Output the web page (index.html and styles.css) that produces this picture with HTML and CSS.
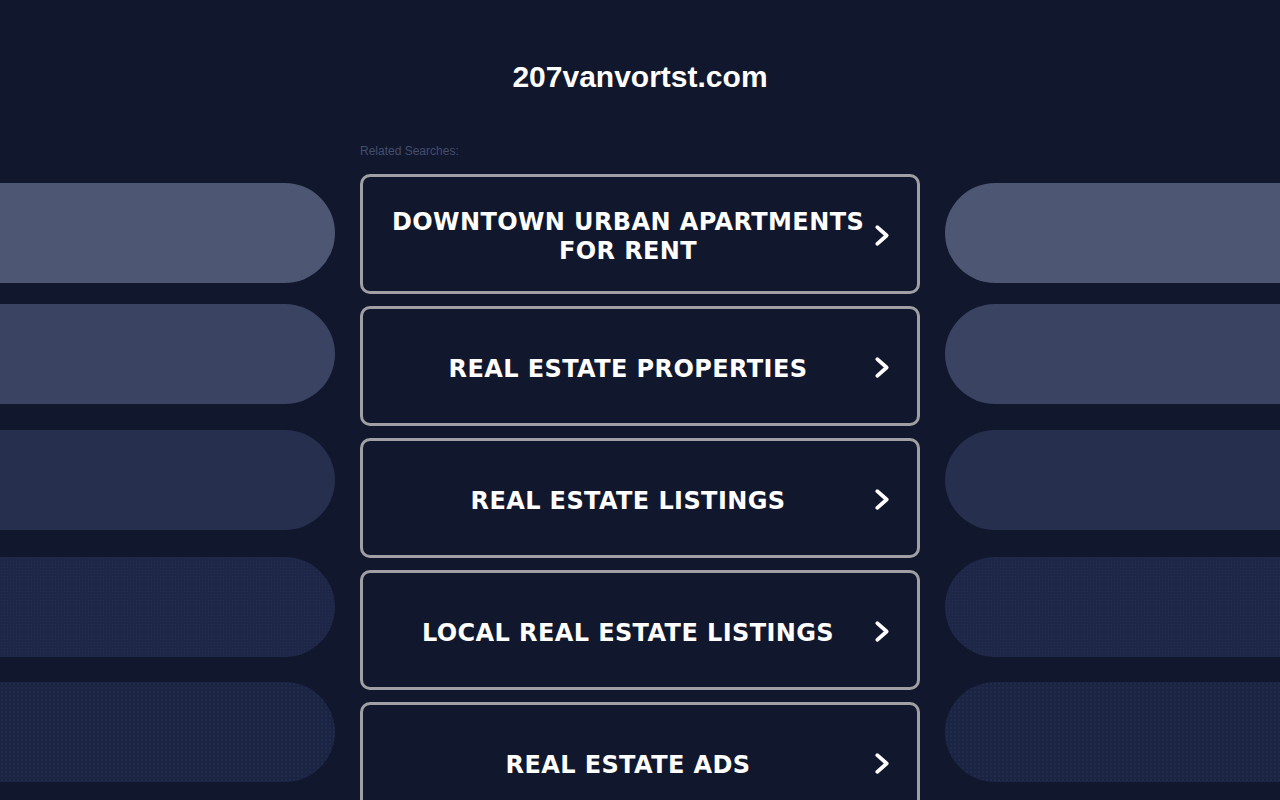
FILE: index.html
```html
<!DOCTYPE html>
<html lang="en">
<head>
<meta charset="utf-8">
<title>207vanvortst.com</title>
<link rel="stylesheet" href="styles.css">
</head>
<body>
<div class="page">
  <aside class="side side-left">
    <div class="pill p1"></div>
    <div class="pill p2"></div>
    <div class="pill p3"></div>
    <div class="pill p4"></div>
    <div class="pill p5"></div>
  </aside>
  <main class="center">
    <h1 class="domain">207vanvortst.com</h1>
    <div class="related">Related Searches:</div>
    <div class="links">
      <a class="link" href="#"><span class="label">DOWNTOWN URBAN APARTMENTS FOR RENT</span><svg class="chev" viewBox="0 0 16 22"><polyline points="3,3 12,11 3,19"/></svg></a>
      <a class="link" href="#"><span class="label">REAL ESTATE PROPERTIES</span><svg class="chev" viewBox="0 0 16 22"><polyline points="3,3 12,11 3,19"/></svg></a>
      <a class="link" href="#"><span class="label">REAL ESTATE LISTINGS</span><svg class="chev" viewBox="0 0 16 22"><polyline points="3,3 12,11 3,19"/></svg></a>
      <a class="link" href="#"><span class="label">LOCAL REAL ESTATE LISTINGS</span><svg class="chev" viewBox="0 0 16 22"><polyline points="3,3 12,11 3,19"/></svg></a>
      <a class="link" href="#"><span class="label">REAL ESTATE ADS</span><svg class="chev" viewBox="0 0 16 22"><polyline points="3,3 12,11 3,19"/></svg></a>
    </div>
  </main>
  <aside class="side side-right">
    <div class="pill p1"></div>
    <div class="pill p2"></div>
    <div class="pill p3"></div>
    <div class="pill p4"></div>
    <div class="pill p5"></div>
  </aside>
</div>
</body>
</html>
```
FILE: styles.css
```css
html, body {
  margin: 0;
  padding: 0;
  background: #11172c;
  height: 100%;
  overflow: hidden;
}

.page {
  display: grid;
  grid-template-columns: 335px 560px 335px;
  column-gap: 25px;
  width: 1280px;
}

.side {
  display: flex;
  flex-direction: column;
  padding-top: 183px;
}

.pill {
  height: 100px;
}

.side-left .pill { border-radius: 0 50px 50px 0; }
.side-right .pill { border-radius: 50px 0 0 50px; }

.pill.p2 { margin-top: 21px; }
.pill.p3 { margin-top: 26px; }
.pill.p4 { margin-top: 27px; }
.pill.p5 { margin-top: 25px; }

.p1 { background: #4d5672; }
.p2 { background: #3a4362; }
.p3 { background: #272f4e; }
.p4 {
  background-color: #1e2747;
  background-image: radial-gradient(rgba(60, 75, 120, 0.22) 0.6px, transparent 0.9px);
  background-size: 3px 3px;
}
.p5 {
  background-color: #1b2443;
  background-image: radial-gradient(rgba(60, 75, 120, 0.28) 0.6px, transparent 0.9px);
  background-size: 4px 4px;
}

.center {
  padding-top: 60px;
}

.domain {
  margin: 0;
  font-family: "Liberation Sans", Arial, sans-serif;
  font-weight: bold;
  font-size: 30px;
  line-height: 34px;
  color: #ffffff;
  text-align: center;
}

.related {
  margin-top: 50px;
  margin-bottom: 16px;
  font-family: "Liberation Sans", Arial, sans-serif;
  font-size: 12px;
  line-height: 14px;
  color: #434e70;
}

.links {
  display: flex;
  flex-direction: column;
  gap: 12px;
}

.link {
  position: relative;
  box-sizing: border-box;
  height: 120px;
  border: 3px solid #a0a0a4;
  border-radius: 10px;
  background: #11172c;
  display: flex;
  align-items: center;
  justify-content: center;
  padding-right: 24px;
  padding-top: 6px;
  text-decoration: none;
}

.label {
  font-family: "DejaVu Sans", Verdana, sans-serif;
  font-weight: bold;
  font-size: 24px;
  letter-spacing: 0.4px;
  line-height: 29px;
  color: #ffffff;
  text-align: center;
  padding: 0 20px;
}

.chev {
  position: absolute;
  right: 26px;
  top: 50%;
  width: 17px;
  height: 23px;
  margin-top: -10px;
  fill: none;
  stroke: #ffffff;
  stroke-width: 3.6;
  stroke-linecap: round;
  stroke-linejoin: round;
}
```
